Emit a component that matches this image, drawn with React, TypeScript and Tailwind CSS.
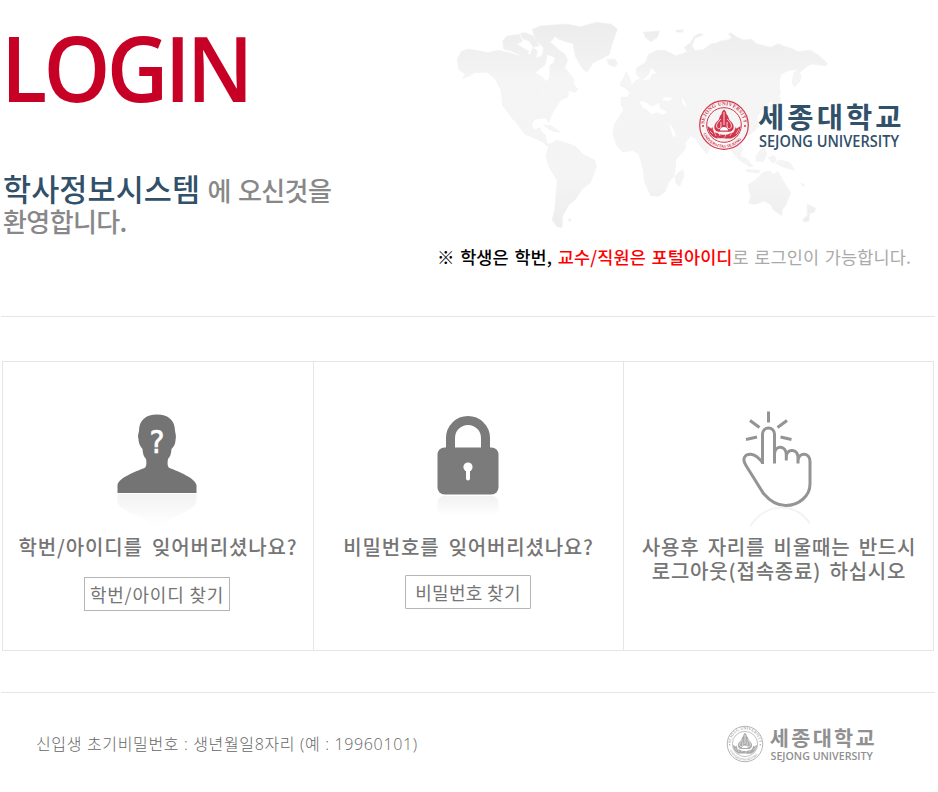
import React from "react";

const KR = "font-['Noto_Sans_CJK_KR',sans-serif]";

function WorldMap() {
  return (
    <svg className="absolute left-[10px] top-[10px] h-[224px] w-[400px]" viewBox="0 0 1200 672" aria-hidden="true">
      <defs>
        <linearGradient id="land" x1="0" y1="0" x2="0" y2="672" gradientUnits="userSpaceOnUse">
          <stop offset="0" stopColor="#ebebeb" />
          <stop offset="0.26" stopColor="#f2f2f2" />
          <stop offset="0.3" stopColor="#f5f5f5" />
          <stop offset="0.75" stopColor="#f4f4f4" />
          <stop offset="1" stopColor="#ececec" />
        </linearGradient>
      </defs>
      <g fill="url(#land)" stroke="#f1f1f1" strokeWidth="2" strokeLinejoin="round">
        <path d="M52 148L64 124L84 117L146 128L174 121L207 128L236 137L252 122L270 135L279 113L292 123L287 145L306 137L311 113L286 90L277 58L300 48L380 42L420 50L470 37L515 43L532 58L515 105L508 134L460 158L440 187L426 174L406 139L399 101L380 96L355 87L345 79L331 96L356 119L374 132L383 150L374 173L399 204L402 224L414 239L402 247L385 239L384 260L362 270L338 306L326 338L317 323L283 327L275 345L281 361L300 353L303 365L315 374L321 402L334 401L350 391L382 400L408 410L430 434L464 451L469 470L451 518L426 537L408 566L385 587L368 617L366 653L351 650L336 630L344 600L352 512L326 468L318 440L326 411L304 393L276 381L254 372L235 346L215 322L188 286L184 242L166 206L140 186L104 188L88 198L69 205L76 193L57 179Z" />
        <path d="M188 92L201 78L238 73L247 94L231 103L258 119L268 124L248 137L218 125L191 117Z" />
        <path d="M241 70L257 68L279 77L291 96L298 107L280 112L267 93L247 86Z" />
        <path d="M500 149L524 147L532 160L526 170L508 165Z" />
        <path d="M311 345L334 348L361 366L341 365L323 354ZM386 626L394 630L388 635Z" />
        <path d="M542 216L550 207L558 187L567 199L575 224L558 233L543 228ZM610 67L630 65L658 63L653 81L633 95L618 85ZM706 61L731 59L727 67L711 66Z" />
        <path d="M544 262L565 262L570 247L557 235L574 230L585 214L602 205L589 193L590 174L617 157L625 134L652 121L678 122L707 137L728 131L742 125L733 112L751 98L764 77L781 70L790 75L765 84L756 107L765 122L788 119L814 101L832 98L842 93L865 89L875 82L865 72L873 68L889 80L910 90L935 88L949 101L992 112L1014 101L1030 108L1052 114L1074 125L1111 121L1136 136L1162 160L1159 167L1115 162L1102 168L1080 186L1072 178L1042 182L1022 194L1018 219L1020 252L1004 271L984 278L987 295L965 300L950 321L955 350L934 372L916 374L900 393L908 420L897 441L879 417L862 398L835 387L814 404L800 432L779 405L771 388L752 377L735 400L736 416L707 449L705 482L698 503L686 516L676 544L656 559L632 557L614 515L609 475L597 432L578 421L549 426L530 407L519 372L524 343L552 297L543 284Z" />
        <path d="M704 497L728 479L732 497L719 529L709 521ZM1063 187L1075 180L1083 197L1080 213L1063 231L1056 216Z" />
        <path d="M993 285L1006 267L1018 260L1022 271L1009 292L982 302ZM862 405L880 415L901 439L920 446L939 468L928 470L899 450L880 430ZM949 435L970 411L981 431L970 454L948 453ZM985 443L1002 437L1010 451L999 460ZM1021 450L1050 458L1063 481L1027 470L1007 459ZM918 479L961 481L955 489L922 485Z" />
        <path d="M925 525L950 507L970 487L991 484L1000 495L1013 484L1035 522L1052 548L1038 585L1027 598L1025 617L1000 600L992 583L972 573L946 583L926 580L932 561ZM1102 582L1127 595L1123 606L1101 613ZM1088 628L1109 611L1107 633L1092 636ZM1082 519L1095 526L1090 530Z" />
      </g>
      <g fill="#fff">
        <path d="M285 188L316 165L323 134L344 143L340 158L329 166L328 203L319 214L306 199ZM626 194L634 173L649 189L635 194L629 208L608 211ZM604 272L621 279L635 290L657 279L660 295L681 307L669 314L652 307L634 313L622 300L610 294L600 279ZM664 270L676 260L696 263L689 273ZM724 260L735 276L738 292L728 282ZM686 338L704 363L708 382L698 378Z" />
        <path d="M303 240l7 3-5 8z" opacity=".4" />
      </g>
    </svg>
  );
}

function UniversityLogo({ id, seal, ink, className }: { id: string; seal: string; ink: string; className: string }) {
  return (
    <svg className={`overflow-visible ${className}`} viewBox="0 0 204 52" role="img">
      <defs>
        <path id={`${id}-top`} d="M6.2 26a19.8 19.8 0 1 1 39.6 0" />
        <path id={`${id}-bottom`} d="M3.4 26a22.6 22.6 0 0 0 45.2 0" />
      </defs>
      <g fill="none" stroke={seal}>
        <circle cx="26" cy="26" r="24.3" strokeWidth="1.2" />
        <circle cx="26" cy="26" r="17.3" strokeWidth="1" />
      </g>
      <g fill={seal} fontFamily="'Liberation Serif',serif" fontSize="5.2" fontWeight="bold">
        <text textLength="59"><textPath href={`#${id}-top`} startOffset="1">SEJONG UNIVERSITY</textPath></text>
        <text fontSize="4.2"><textPath href={`#${id}-bottom`} startOffset="9">UNIVERSITAS SEJONG</textPath></text>
      </g>
      <circle cx="5" cy="27" r="1" fill={seal} />
      <circle cx="47" cy="27" r="1" fill={seal} />
      <path d="M26 10.500c-1.500 1.100-2.300 2.600-2.400 4.400-2.200 2-2 4-3 6-2.800 2.400-4.300 4.400-4.300 7.100 0 3.500 3 5 5.300 4.800h8.800c2.300.2 5.300-1.300 5.300-4.800 0-2.700-1.500-4.700-4.300-7.100-1-2-.8-4-3-6-.1-1.800-.9-3.300-2.400-4.400z" fill={seal} />
      <path d="M26 13v13M22.800 20c-3.200 3.500-4.700 5.300-4 8 .6 2.200 3.200 2.300 4 0 .4-1.300.2-3.700 0-5M29.200 20c3.200 3.500 4.700 5.300 4 8-.6 2.200-3.200 2.300-4 0-.4-1.300-.2-3.700 0-5" fill="none" stroke="#fff" strokeWidth=".8" />
      <path d="M22 31.500c0-2 1.500-3.400 4-3.400s4 1.400 4 3.400z" fill="#fff" />
      <path d="M9.500 27l4 2.700.6-2 2.300 5.500 3.300 1c3.200 2 9.400 2 12.600 0l3.300-1 2.300-5.500.6 2 4-2.700c-.2 6.500-4.400 11.200-9.500 12.500h-14C13.900 38.200 9.700 33.500 9.500 27z" fill={seal} />
      <path d="M12 32l3 3m0-5 3 7m3-3 1 3m19-7-3 5m-3-4-3 6m-4-2-1 3m-8 1q4 1.500 8 0" fill="none" stroke="#fff" strokeWidth=".6" />
      <g fill={ink}>
        <text x="60" y="29" fontFamily="'Noto Sans CJK KR',sans-serif" fontSize="28.500" fontWeight="700" textLength="143.500" lengthAdjust="spacing">세종대학교</text>
        <text x="61" y="48" fontFamily="'Open Sans',sans-serif" fontSize="15.400" fontWeight="600" textLength="140" lengthAdjust="spacingAndGlyphs">SEJONG UNIVERSITY</text>
      </g>
    </svg>
  );
}

function UserIcon() {
  const body = "M27.500 79v-8c1-7 17-13 27-17 2-1 2.300-5 1.500-9-2-2-3.200-5-3.500-10-3-3-4-7-4-10-1-4 0-5 .5-8C49 6 56 0.500 67 0.500s18 5.500 18 16.500c.5 3 1.500 5 .5 9 0 3-1 6-4 9-.3 5-1.500 8-3.500 10-.8 4-.5 8 1.500 9 10 4 25.500 10 27 17v8z";
  return (
    <svg className="mr-[3px] h-[116px] w-[134px]" viewBox="0 0 134 116" aria-hidden="true">
      <defs>
        <linearGradient id="user-reflect" x1="0" y1="0" x2="0" y2="1">
          <stop offset="0.6" stopColor="#777" stopOpacity="0" />
          <stop offset="1" stopColor="#777" stopOpacity=".09" />
        </linearGradient>
      </defs>
      <path d={body} fill="#747474" />
      <text x="67" y="38.500" textAnchor="middle" fill="#fff" stroke="#fff" strokeWidth=".7" fontFamily="'DejaVu Sans',sans-serif" fontWeight="400" fontSize="32" textLength="15" lengthAdjust="spacingAndGlyphs">?</text>
      <path d={body} fill="url(#user-reflect)" transform="translate(0 159) scale(1 -1)" />
    </svg>
  );
}

function LockIcon() {
  return (
    <svg className="h-[116px] w-[134px]" viewBox="0 0 134 116" aria-hidden="true">
      <defs>
        <linearGradient id="lock-reflect" x1="0" y1="0" x2="0" y2="1">
          <stop offset="0" stopColor="#777" stopOpacity=".1" />
          <stop offset="1" stopColor="#777" stopOpacity="0" />
        </linearGradient>
      </defs>
      <path d="M48.500 36V24a17.500 17.500 0 0 1 35 0v12" fill="none" stroke="#7b7b7b" strokeWidth="9" />
      <rect x="35.500" y="33.500" width="61" height="47" rx="7" fill="#7b7b7b" />
      <circle cx="66" cy="53" r="4.600" fill="#fff" />
      <path d="M66 53v11.500" stroke="#fff" strokeWidth="4" strokeLinecap="round" />
      <rect x="35.500" y="82" width="61" height="20" rx="6" fill="url(#lock-reflect)" />
    </svg>
  );
}

function TapIcon() {
  return (
    <svg className="mr-[14px] h-[116px] w-[134px] overflow-visible" viewBox="0 0.500 134 116" fill="none" aria-hidden="true">
      <g stroke="#949494" strokeWidth="3">
        <path d="M57.500 50.500V20.500a6 6 0 0 1 12 0V50M69.500 40c1-9 11.500-8 11.800 1v6M81.300 42c2-8 11.500-6 11.700 2v6M93 47c1-9 12-8 12 1v22.500c0 12-11 21.500-24.500 21.500-9 0-16-5-22-12L41 52c-4-6-2-11.500 5-11.300 4.500.3 9 5 12 9" />
        <path d="M63.500-2v11M45 7l9.500 7M82 7l-9.500 7M41 26l11-2.500M86.500 26l-11-2.500" />
      </g>
      <path d="M45 113c14-23 44-26 60-3" stroke="#f3f3f3" strokeWidth="2" />
    </svg>
  );
}

function HelpCard({ icon, children }: { icon: React.ReactNode; children: React.ReactNode }) {
  return (
    <div className="flex flex-col items-center border-l border-[#e6e6e6] pt-[52px]">
      {icon}
      {children}
    </div>
  );
}

export default function App() {
  return (
    <main className={`h-[792px] w-[938px] overflow-hidden bg-white ${KR}`}>
      <header className="mx-[1px] flex h-[317px] w-[934px] border-b border-[#e6e6e6]">
        <div className="w-[429px] shrink-0">
          <h1 className="mt-[18px] w-max origin-left scale-x-[0.94] whitespace-nowrap font-['Open_Sans',sans-serif] text-[90.500px] font-semibold leading-[99px] tracking-[-4px] text-[#c70025]">LOGIN</h1>
          <p className="mt-[56px] w-[345px] whitespace-nowrap pl-[2px] text-[26px] font-medium leading-[31px] tracking-[-0.6px] text-[#888] [word-spacing:2px]">
            <span className="text-[30.500px] tracking-[0.100px] text-[#31506a]">학사정보시스템</span> 에 오신것을
            <br />
            환영합니다.
          </p>
        </div>
        <div className="relative flex flex-1 flex-col items-end">
          <WorldMap />
          <UniversityLogo id="brand" seal="#d2364c" ink="#31506a" className="relative mr-[33px] mt-[99px] h-[52px] w-[204px]" />
          <p className="relative mr-[24px] mt-[93px] whitespace-nowrap text-[17.500px] leading-[26px] tracking-[0.130px] text-[#aaa] [word-spacing:1.500px]">
            <span className="font-medium text-black">※ 학생은 학번, </span>
            <span className="font-medium text-[#f00]">교수/직원은 포털아이디</span>로 로그인이 가능합니다.
          </p>
        </div>
      </header>

      <section className="ml-[2px] mt-[44px] grid h-[290px] w-[932px] grid-cols-[311px_310px_311px] border-y border-r border-[#e6e6e6] text-[#757575]">
        <HelpCard icon={<UserIcon />}>
          <p className="mt-[2px] whitespace-nowrap text-[20px] font-medium leading-[30px] tracking-[0.850px] [word-spacing:4px]">학번/아이디를 잊어버리셨나요?</p>
          <button className="mr-[2px] mt-[15px] h-[34px] w-[146px] whitespace-nowrap border border-[#b5b5b5] text-[18px] leading-[30px] tracking-[0.800px]">학번/아이디 찾기</button>
        </HelpCard>
        <HelpCard icon={<LockIcon />}>
          <p className="mt-[2px] whitespace-nowrap text-[20px] font-medium leading-[30px] tracking-[0.800px] [word-spacing:4px]">비밀번호를 잊어버리셨나요?</p>
          <button className="mr-[1px] mt-[13px] h-[34px] w-[126px] whitespace-nowrap rounded-[1px] border border-[#b5b5b5] text-[18px] leading-[30px] tracking-[0.300px]">비밀번호 찾기</button>
        </HelpCard>
        <HelpCard icon={<TapIcon />}>
          <p className="mt-[5px] whitespace-nowrap text-center text-[20px] font-medium leading-[24px] tracking-[0.800px] [word-spacing:3px]">
            사용후 자리를 비울때는 반드시
            <br />
            로그아웃(접속종료) 하십시오
          </p>
        </HelpCard>
      </section>

      <footer className="mx-[1px] mt-[41px] flex h-[102px] w-[934px] items-center justify-between border-t border-[#e6e6e6] pl-[35px] pr-[60px]">
        <p className="whitespace-nowrap pt-[1px] font-['Open_Sans','Noto_Sans_CJK_KR',sans-serif] text-[16px] font-light leading-[24px] tracking-[0.650px] text-[#666]">신입생 초기비밀번호 : 생년월일8자리 (예 : 19960101)</p>
        <UniversityLogo id="footer" seal="#aaaaaa" ink="#909090" className="h-[38px] w-[149px]" />
      </footer>
    </main>
  );
}
